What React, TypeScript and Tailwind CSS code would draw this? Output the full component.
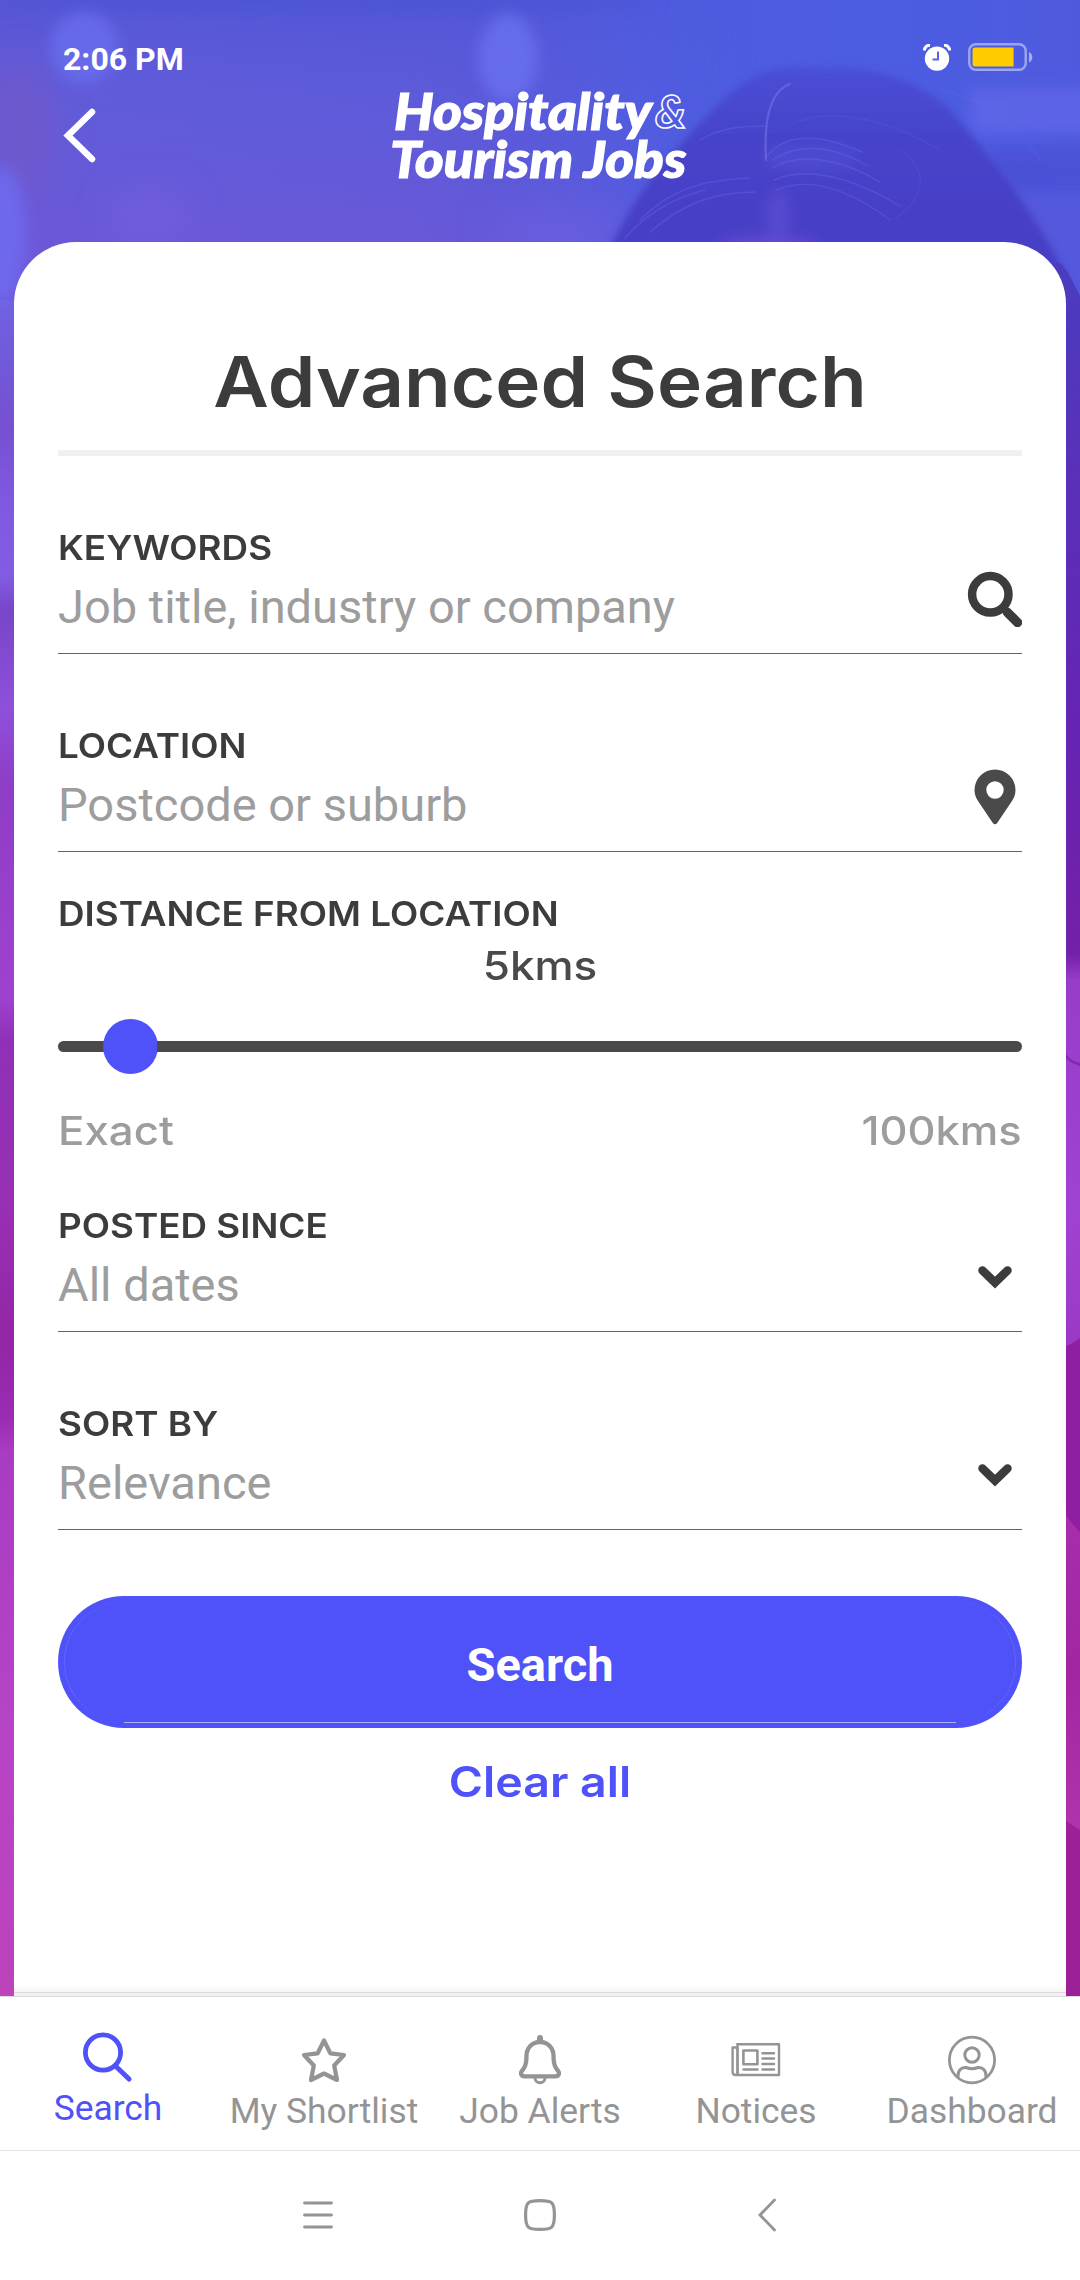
import type { ReactNode } from "react";

const inter = "font-[Inter,sans-serif]";
const roboto = "font-[Roboto,sans-serif]";

function Backdrop() {
  return (
    <svg className="absolute left-0 top-0 h-[1996px] w-[1080px]" viewBox="0 0 1080 1996" preserveAspectRatio="none">
      <defs>
        <linearGradient id="top" x1="0" y1="0" x2="1" y2="0">
          <stop offset="0" stopColor="#5e58d6" />
          <stop offset="0.1" stopColor="#5a5ad8" />
          <stop offset="0.45" stopColor="#5458d8" />
          <stop offset="0.6" stopColor="#4e5ce0" />
          <stop offset="0.9" stopColor="#4c5ce0" />
          <stop offset="1" stopColor="#4e5ade" />
        </linearGradient>
        <linearGradient id="warm" x1="0" y1="0" x2="0" y2="1">
          <stop offset="0" stopColor="#5054d4" stopOpacity="0.5" />
          <stop offset="0.3" stopColor="#6c60dc" stopOpacity="0.35" />
          <stop offset="1" stopColor="#7a54d4" stopOpacity="0.8" />
        </linearGradient>
        <linearGradient id="fade" x1="0" y1="0" x2="1" y2="0">
          <stop offset="0" stopColor="#fff" />
          <stop offset="0.55" stopColor="#fff" />
          <stop offset="1" stopColor="#000" />
        </linearGradient>
        <mask id="fadeRight" maskUnits="userSpaceOnUse" x="0" y="0" width="760" height="320">
          <rect width="760" height="320" fill="url(#fade)" />
        </mask>
        <linearGradient id="left" x1="0" y1="242" x2="0" y2="1996" gradientUnits="userSpaceOnUse">
          <stop offset="0" stopColor="#7068ec" />
          <stop offset="0.04" stopColor="#7060e0" />
          <stop offset="0.105" stopColor="#7650d0" />
          <stop offset="0.15" stopColor="#8059e2" />
          <stop offset="0.19" stopColor="#825ce4" />
          <stop offset="0.21" stopColor="#7846c8" />
          <stop offset="0.265" stopColor="#8e50da" />
          <stop offset="0.31" stopColor="#8f3dc6" />
          <stop offset="0.43" stopColor="#9e42d0" />
          <stop offset="0.455" stopColor="#9030b8" />
          <stop offset="0.55" stopColor="#9830b4" />
          <stop offset="0.625" stopColor="#9226a6" />
          <stop offset="0.67" stopColor="#9a2cb2" />
          <stop offset="0.69" stopColor="#a83cc2" />
          <stop offset="0.85" stopColor="#b644c6" />
          <stop offset="1" stopColor="#bd42bb" />
        </linearGradient>
        <linearGradient id="right" x1="0" y1="260" x2="0" y2="1996" gradientUnits="userSpaceOnUse">
          <stop offset="0" stopColor="#4a3cc0" />
          <stop offset="0.13" stopColor="#5a30b8" />
          <stop offset="0.28" stopColor="#6624b2" />
          <stop offset="0.4" stopColor="#7420a8" />
          <stop offset="0.415" stopColor="#983cca" />
          <stop offset="0.55" stopColor="#a042d2" />
          <stop offset="0.625" stopColor="#9c38c6" />
          <stop offset="1" stopColor="#9c38c6" />
        </linearGradient>
        <linearGradient id="pinkA" x1="0" y1="0" x2="0" y2="1">
          <stop offset="0" stopColor="#a82eac" />
          <stop offset="0.5" stopColor="#a226a2" />
          <stop offset="1" stopColor="#b034ac" />
        </linearGradient>
        <linearGradient id="hair" x1="0" y1="0" x2="0" y2="1">
          <stop offset="0" stopColor="#4a4ed6" />
          <stop offset="0.25" stopColor="#4643ca" />
          <stop offset="0.6" stopColor="#463fc6" />
          <stop offset="1" stopColor="#4a3cc2" />
        </linearGradient>
        <filter id="soft" x="-40%" y="-40%" width="180%" height="180%"><feGaussianBlur stdDeviation="7" /></filter>
        <filter id="wide" x="-100%" y="-100%" width="300%" height="300%"><feGaussianBlur stdDeviation="18" /></filter>
        <filter id="edge" x="-10%" y="-10%" width="120%" height="120%"><feGaussianBlur stdDeviation="3.5" /></filter>
        <filter id="strand" x="-10%" y="-10%" width="120%" height="120%"><feGaussianBlur stdDeviation="0.7" /></filter>
      </defs>
      <rect width="1080" height="320" fill="url(#top)" />
      <rect width="760" height="320" fill="url(#warm)" mask="url(#fadeRight)" />
      <ellipse cx="330" cy="2" rx="330" ry="10" fill="#4c54d4" opacity="0.7" filter="url(#soft)" />
      <ellipse cx="20" cy="130" rx="36" ry="70" fill="#7458c8" opacity="0.6" filter="url(#wide)" />
      <ellipse cx="84" cy="48" rx="34" ry="36" fill="#686cec" opacity="0.9" filter="url(#soft)" />
      <ellipse cx="508" cy="58" rx="30" ry="44" fill="#686eee" opacity="0.9" filter="url(#soft)" />
      <ellipse cx="150" cy="215" rx="40" ry="26" fill="#7660e0" opacity="0.6" filter="url(#wide)" />
      <ellipse cx="560" cy="232" rx="70" ry="26" fill="#7060e2" opacity="0.6" filter="url(#wide)" />
      <rect x="970" y="88" width="150" height="46" fill="#6468ea" opacity="0.7" filter="url(#soft)" />
      <rect x="990" y="148" width="150" height="46" fill="#4c4ad0" opacity="0.5" filter="url(#soft)" />
      <rect x="1010" y="195" width="110" height="90" fill="#5858dc" opacity="0.7" filter="url(#soft)" />
      <path d="M604 260C625 215 650 175 685 140 710 112 735 84 765 72 790 64 815 70 840 68 880 68 925 85 950 110 985 150 1020 195 1042 232 1060 262 1080 300 1090 340H590Z" fill="url(#hair)" filter="url(#edge)" />
      <ellipse cx="768" cy="250" rx="52" ry="14" fill="#7050d4" opacity="0.7" filter="url(#soft)" />
      <ellipse cx="778" cy="215" rx="12" ry="26" fill="#6c58da" opacity="0.45" filter="url(#soft)" />
      <ellipse cx="810" cy="158" rx="48" ry="14" fill="#5a5ae0" opacity="0.35" filter="url(#soft)" />
      <g fill="none" stroke="#7472ea" strokeLinecap="round" filter="url(#strand)">
        <path d="M766 160C764 125 768 92 790 84" strokeWidth="2.2" opacity="0.6" />
        <path d="M767 156C790 128 830 138 862 152M772 160C800 142 835 146 868 166M772 168C800 152 840 158 880 182M774 180C805 166 850 176 900 206M776 190C810 176 850 190 890 220M700 140C720 128 740 126 765 126M640 220C670 190 700 180 750 178M650 232C680 206 710 192 755 192M625 238C650 210 680 196 705 190" strokeWidth="1.4" opacity="0.3" />
        <path d="M790 125C830 105 890 120 940 150M900 150C930 170 925 200 895 218M940 90C990 100 1020 130 1040 160" strokeWidth="1.3" opacity="0.16" />
      </g>
      <rect y="300" width="24" height="1696" fill="url(#left)" />
      <ellipse cx="2" cy="235" rx="24" ry="68" fill="#6e68ec" filter="url(#soft)" />
      <path d="M1056 262C1064 262 1072 280 1080 296V1996H1056Z" fill="url(#right)" />
      <path d="M1066 1054C1070 1060 1076 1062 1080 1063V1066C1074 1064 1068 1061 1066 1058Z" fill="#8428b4" />
      <path d="M1056 1348C1066 1347 1074 1343 1080 1338V1996H1056Z" fill="#901ea2" />
      <path d="M1056 1500C1064 1512 1072 1525 1080 1532V1840H1056Z" fill="url(#pinkA)" />
      <path d="M1056 1815C1064 1818 1072 1826 1080 1830V1996H1056Z" fill="#9c2098" />
    </svg>
  );
}

function AlarmIcon() {
  return (
    <svg className="h-[27px] w-[28px]" viewBox="0 0 28 27">
      <path d="M1.5 6.5A5 5 0 0 1 7 1.3" fill="none" stroke="#fff" strokeWidth="3" />
      <path d="M26.5 6.5A5 5 0 0 0 21 1.3" fill="none" stroke="#fff" strokeWidth="3" />
      <circle cx="14" cy="14.6" r="12.2" fill="#fff" />
      <path d="M15 7.5V15.5H9.5" fill="none" stroke="#5a64e0" strokeWidth="2" />
    </svg>
  );
}

function BatteryIcon() {
  return (
    <svg className="h-[28px] w-[66px]" viewBox="0 0 66 28">
      <rect x="1.3" y="1.3" width="56.4" height="25.4" rx="6.5" fill="none" stroke="#fff" strokeOpacity="0.45" strokeWidth="2.4" />
      <path d="M7 4.5H45.6V23.5H7A2.5 2.5 0 0 1 4.5 21V7A2.5 2.5 0 0 1 7 4.5Z" fill="#ffcc00" />
      <path d="M61 9C65.500 11.500 65.500 17 61 19.500Z" fill="#fff" fillOpacity="0.5" />
    </svg>
  );
}

function Field({ label, value, icon }: { label: string; value: string; icon: ReactNode }) {
  return (
    <div className="flex h-[127px] flex-col border-b border-[#5254ee]">
      <Label>{label}</Label>
      <div className="mt-[11px] flex h-14 items-start justify-between">
        <span className={`${roboto} text-[47px] leading-[56px] text-[#9d9d9d]`}>{value}</span>
        {icon}
      </div>
    </div>
  );
}

function Label({ children }: { children: ReactNode }) {
  return (
    <div className={`${inter} mt-px origin-left scale-x-[1.082] self-start text-[34px] font-semibold leading-10 whitespace-nowrap text-[#3c3c3c]`}>
      {children}
    </div>
  );
}

function Chevron() {
  return (
    <svg className="mr-[9px] mt-[7px] h-[26px] w-[36px]" viewBox="0 0 36 26">
      <path d="M5.500 6.500L18 18.500 30.500 6.500" fill="none" stroke="#3c3c3c" strokeWidth="8.500" strokeLinecap="round" />
    </svg>
  );
}

function Tab({ label, active, children }: { label: string; active?: boolean; children: ReactNode }) {
  return (
    <div className={active ? "flex w-[216px] flex-col items-center pt-[35px] text-[#4f52f8]" : "flex w-[216px] flex-col items-center pt-[38px] text-[#949494]"}>
      <svg className="h-[50px] w-[50px]" viewBox="0 0 50 50" fill="none" stroke="currentColor" strokeLinejoin="round" strokeLinecap="round">
        {children}
      </svg>
      <span className={`${roboto} mt-[6px] text-[35.4px] leading-10 whitespace-nowrap`}>{label}</span>
    </div>
  );
}

export default function App() {
  return (
    <div className="relative flex h-[2280px] w-[1080px] flex-col overflow-hidden bg-white">
      <Backdrop />

      <header className="relative flex h-[242px] flex-col">
        <div className="flex h-[84px] items-start justify-between pl-[63px] pr-[46px]">
          <span className={`${roboto} mt-[39px] text-[32px] font-bold leading-10 text-white`}>2:06 PM</span>
          <div className="mt-[43px] flex items-center gap-[17px]">
            <AlarmIcon />
            <BatteryIcon />
          </div>
        </div>
        <div className="flex items-start pl-[61px]">
          <svg className="mt-[22px] h-[58px] w-[40px]" viewBox="0 0 40 58">
            <path d="M31 6L7 29.500 31 53" fill="none" stroke="#fff" strokeWidth="6.500" strokeLinecap="round" />
          </svg>
          <div className="ml-[289px] mt-[3px] flex flex-col items-start font-[Lato,sans-serif] text-[51px] font-black italic leading-[47.5px] text-white">
            <div className="flex items-start">
              <span className="ml-[4px] w-[260px] origin-left scale-x-[1.08] [-webkit-text-stroke:1.200px_white]">Hospitality</span>
              <span className="ml-[1px] text-[46px] text-transparent [-webkit-text-stroke:1.500px_white]">&amp;</span>
            </div>
            <span className="origin-left scale-x-[1.075] whitespace-nowrap [-webkit-text-stroke:1.200px_white]">Tourism Jobs</span>
          </div>
        </div>
      </header>

      <main className="relative mx-[14px] flex h-[1754px] flex-col rounded-t-[62px] bg-white px-[44px]">
        <h1 className={`${inter} mt-[98px] scale-x-[1.091] text-center text-[70px] font-semibold leading-[84px] text-[#3c3c3c]`}>
          Advanced Search
        </h1>
        <div className="mt-[26px] h-[6px] bg-[#f0f0f0]" />

        <div className="mt-[71px] flex flex-col gap-[71px]">
          <Field
            label="KEYWORDS"
            value="Job title, industry or company"
            icon={
              <svg className="-mt-[8px] h-[56px] w-[56px]" viewBox="0 0 56 56" fill="none" stroke="#3c3c3c">
                <circle cx="24.300" cy="23.300" r="18.200" strokeWidth="8.500" />
                <path d="M41.500 41.500L51.500 51.500" strokeWidth="9.500" strokeLinecap="round" />
                <path d="M36 36L43 43" strokeWidth="6" />
              </svg>
            }
          />
          <Field
            label="LOCATION"
            value="Postcode or suburb"
            icon={
              <svg className="-mt-[8px] mr-[6px] h-[56px] w-[42px]" viewBox="0 0 42 56">
                <path fillRule="evenodd" d="M21 0.500A20.500 20.500 0 0 1 41.500 21C41.500 26.500 39.500 30 37 33.500L23 54.200Q21 56.500 19 54.200L5 33.500C2.500 30 .5 26.500 .5 21A20.500 20.500 0 0 1 21 .5ZM21 12.300A8.700 8.700 0 1 0 21 29.700 8.700 8.700 0 1 0 21 12.300Z" fill="#4a4a4a" />
              </svg>
            }
          />
        </div>

        <section className="mt-[41px] flex flex-col">
          <Label>DISTANCE FROM LOCATION</Label>
          <div className={`${inter} mt-2 scale-x-[1.1] text-center text-[40px] font-[450] leading-[48px] text-[#4a4a4a]`}>5kms</div>
          <div className="mt-[29px] flex h-[55px] items-center">
            <div className="h-[11px] w-[64px] rounded-l-full bg-[#4a4a4a]" />
            <div className="-ml-[19px] h-[55px] w-[55px] rounded-full bg-[#4f52f8]" />
            <div className="-ml-px h-[11px] flex-1 rounded-r-full bg-[#4a4a4a]" />
          </div>
          <div className={`${inter} mt-[33px] flex justify-between text-[40px] font-[450] leading-[48px] text-[#9d9d9d]`}>
            <span className="origin-left scale-x-[1.095]">Exact</span>
            <span className="origin-right scale-x-[1.085]">100kms</span>
          </div>
        </section>

        <div className="mt-[50px] flex flex-col gap-[71px]">
          <Field label="POSTED SINCE" value="All dates" icon={<Chevron />} />
          <Field label="SORT BY" value="Relevance" icon={<Chevron />} />
        </div>

        <button className={`${roboto} relative mt-[66px] flex h-[132px] flex-col items-center justify-between rounded-[66px] bg-[#4f52f8] pb-[5px] pt-[41px] text-[47px] font-bold leading-[56px] text-white`}>
          <span>Search</span>
          <span className="h-px w-[832px] bg-white/55" />
          <span className="absolute inset-[6px] rounded-[60px] border-x border-dotted border-white/25" />
        </button>
        <div className={`${inter} mt-[29px] scale-x-[1.107] text-center text-[42px] font-[580] leading-[50px] text-[#4f52f8]`}>Clear all</div>

        <div className="-mx-[44px] mt-auto flex flex-col">
          <div className="h-[8px] bg-gradient-to-b from-white to-[#f6f5f6]" />
          <div className="h-px bg-[#e2d6e4]" />
          <div className="h-[3px] bg-[#f2f2f2]" />
        </div>
      </main>

      <nav className="relative flex h-[155px] border-b border-t border-b-[#e4e4e4] border-t-[#dadada] bg-white">
        <Tab label="Search" active>
          <circle cx="20" cy="20.500" r="17.600" strokeWidth="4.800" />
          <path d="M33 34.500L46 47" strokeWidth="5" />
        </Tab>
        <Tab label="My Shortlist">
          <path d="M25 5.500L31.300 18.300 45 20 35.200 30.500 38 45 25 38.500 12 45 14.800 30.500 5 20 18.700 18.300Z" strokeWidth="4.200" />
        </Tab>
        <Tab label="Job Alerts">
          <path d="M25 7C17 7 11.500 13 11.500 21c0 7-.8 10.500-3.500 13.500-3.500 3.500-2 6.800 1.500 6.800h31c3.500 0 5-3.300 1.500-6.800C39.300 31.500 38.500 28 38.500 21 38.500 13 33 7 25 7z" strokeWidth="4.300" />
          <path d="M20 43a5 4.800 0 0 0 10 0" strokeWidth="3" />
          <path d="M25 3v3" strokeWidth="6" />
        </Tab>
        <Tab label="Notices">
          <path d="M6.500 9.200H48V40H4.500A3 3 0 0 1 1.600 37V12.500H6.500V39" strokeWidth="2.400" />
          <path d="M6.500 9.200V39" strokeWidth="2.200" />
          <rect x="12.400" y="15.500" width="14" height="13.800" strokeWidth="2.600" />
          <path d="M31.500 18.300H43M31.500 23.500H43M31.500 29H43M31.500 34.500H43M12.500 34.500H26.500" strokeWidth="2.500" />
        </Tab>
        <Tab label="Dashboard">
          <ellipse cx="25" cy="25" rx="22.600" ry="22.800" strokeWidth="2.800" />
          <circle cx="25" cy="20" r="7.200" strokeWidth="3" />
          <path d="M11 42C10.500 36 14 32 19 32.500 22.500 34 27.500 34 31 32.500 36 32 39.500 36 39 42" strokeWidth="3" />
        </Tab>
      </nav>

      <div className="relative flex h-[129px] items-center bg-white pb-[2px] pl-[303px]">
        <svg className="h-[32px] w-[30px]" viewBox="0 0 30 32" stroke="#949494" strokeWidth="2.800" strokeLinecap="round">
          <path d="M1.500 4H28.500M1.500 16H28.500M1.500 28H28.500" />
        </svg>
        <svg className="ml-[191px] h-[32px] w-[32px]" viewBox="0 0 32 32" fill="none" stroke="#949494" strokeWidth="3.200">
          <path d="M16 1.600C28 1.600 30.400 3 30.400 16S28 30.400 16 30.400 1.600 29 1.600 16 4 1.600 16 1.600Z" />
        </svg>
        <svg className="ml-[202px] h-[34px] w-[18px]" viewBox="0 0 18 34" fill="none" stroke="#949494" strokeWidth="2.800" strokeLinecap="round">
          <path d="M16.500 2L2 17 16.500 32" />
        </svg>
      </div>
    </div>
  );
}
